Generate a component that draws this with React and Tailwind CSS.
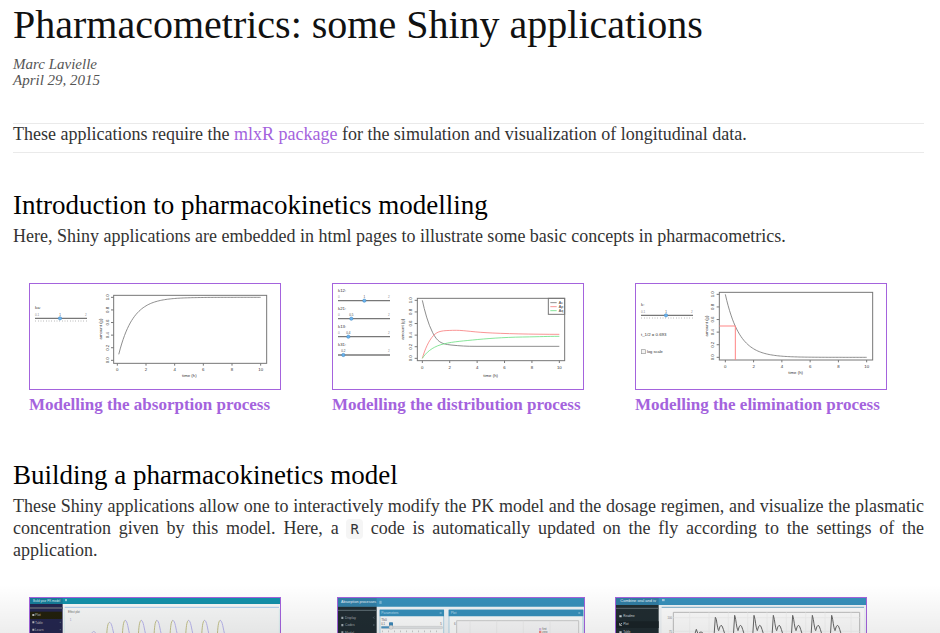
const GREY = "#777";

function Axis({ box, xTicks, yTicks, xTitle, yTitle }) {
  const [left, top, right, bottom] = box;
  return (
    <g fontSize="13" fill="#333" stroke="none" textAnchor="middle">
      <rect x={left} y={top} width={right - left} height={bottom - top} fill="none" stroke={GREY} strokeWidth="3" />
      {xTicks.map(([x, label]) => (
        <g key={label}>
          <path d={`M${x} ${bottom}v7`} stroke={GREY} strokeWidth="3" />
          <text x={x} y={bottom + 24}>{label}</text>
        </g>
      ))}
      {yTicks.map(([y, label]) => (
        <g key={label}>
          <path d={`M${left} ${y}h-8`} stroke={GREY} strokeWidth="3" />
          <text transform={`translate(${left - 15} ${y}) rotate(-90)`}>{label}</text>
        </g>
      ))}
      <text x={xTitle[0]} y={xTitle[1]}>time (h)</text>
      <text transform={`translate(${yTitle[0]} ${yTitle[1]}) rotate(-90)`}>amount (g)</text>
    </g>
  );
}

function ticks(start, end, labels) {
  return labels.map((label, i) => [start + ((end - start) * i) / (labels.length - 1), label]);
}

const HOURS = ["0", "2", "4", "6", "8", "10"];
const AMOUNTS = ["0.0", "0.2", "0.4", "0.6", "0.8", "1.0"];

function curve(fn, from, x0, x10, y0, y1) {
  const points = [];
  for (let t = from; t <= 10.001; t += 0.1) {
    points.push(`${(x0 + ((x10 - x0) * t) / 10).toFixed(1)},${(y0 + (y1 - y0) * fn(t)).toFixed(1)}`);
  }
  return points.join(" ");
}

function SliderDrawing({ x, y, knob, name, value, min = "0", nameGap = 27, dots = false }) {
  return (
    <g>
      <text x={x} y={y - nameGap} fontSize="13" fill="#333">{name}</text>
      <g fontSize="9" fill="#888">
        {knob - x > 25 && <text x={x} y={y - 8}>{min}</text>}
        <text x={knob} y={y - 8} textAnchor="middle" fill="#444">{value}</text>
        <text x={x + 155} y={y - 8} textAnchor="end">2</text>
      </g>
      <path d={`M${x} ${y}h156`} stroke="#777" strokeWidth="4" />
      {dots && <path d={`M${x + 1} ${y + 8}h160`} stroke="#bbb" strokeWidth="4" strokeDasharray="2 6" />}
      <circle cx={knob} cy={y} r="5" fill="#69b3ee" stroke="#3c83bd" strokeWidth="1.5" />
    </g>
  );
}

function AbsorptionPlot() {
  return (
    <svg viewBox="30 27 750 315" className="block w-full font-['Liberation_Sans',sans-serif]" aria-hidden="true">
      <SliderDrawing x={45} y={130} knob={120} name="ka:" value="1" min="0.1" dots />
      <Axis box={[281, 61, 740, 265]} xTicks={ticks(292, 722, HOURS)} yTicks={ticks(256, 67, AMOUNTS)} xTitle={[508, 305]} yTitle={[246, 162]} />
      <polyline points={curve((t) => 1 - Math.exp(-t), 0.1, 292, 722, 256, 67)} fill="none" stroke="#777" strokeWidth="2.5" />
    </svg>
  );
}

function DistributionPlot() {
  return (
    <svg viewBox="21 27 750 315" className="block w-full font-['Liberation_Sans',sans-serif]" aria-hidden="true">
      <SliderDrawing x={36} y={77} knob={115} name="k12:" value="1" />
      <SliderDrawing x={36} y={131} knob={76} name="k21:" value="0.5" />
      <SliderDrawing x={36} y={185} knob={67} name="k13:" value="0.4" />
      <SliderDrawing x={36} y={240} knob={52} name="k31:" value="0.2" />
      <Axis box={[274, 70, 716, 257]} xTicks={ticks(289, 700, HOURS)} yTicks={ticks(250, 76, AMOUNTS)} xTitle={[494, 306]} yTitle={[234, 163]} />
      <g fill="none" strokeWidth="2.5">
        <path d="M289 76C296 108 306 146 320 173S345 207 375 210S420 214 450 214H700" stroke="#777" />
        <path d="M289 250C296 225 308 197 322 182S350 167 380 166S430 170 480 173S620 178 700 178" stroke="#f88080" />
        <path d="M289 250C300 233 318 217 345 209S400 199 440 195S530 187 590 186S660 184 700 184" stroke="#70e085" />
        <rect x="667" y="70" width="49" height="48" stroke={GREY} strokeWidth="3" />
        <path d="M673 83h19" stroke="#777" />
        <path d="M673 95h19" stroke="#f88080" />
        <path d="M673 107h19" stroke="#70e085" />
      </g>
      <g fontSize="11" fill="#333" textAnchor="middle">
        <text x="705" y="87">Ac</text>
        <text x="705" y="99">Ap</text>
        <text x="705" y="111">Aq</text>
      </g>
    </svg>
  );
}

function EliminationPlot() {
  return (
    <svg viewBox="21 27 750 315" className="block w-full font-['Liberation_Sans',sans-serif]" aria-hidden="true">
      <SliderDrawing x={36} y={121} knob={111} name="k:" value="1" min="0.1" dots />
      <text x="36" y="182" fontSize="13" fill="#333">t_1/2 = 0.693</text>
      <rect x="37" y="224" width="12" height="12" fill="#f4f4f4" stroke="#999" strokeWidth="2" />
      <text x="54" y="234" fontSize="12" fill="#333">log scale</text>
      <Axis box={[271, 52, 731, 255]} xTicks={ticks(289, 713, HOURS)} yTicks={ticks(247, 58, AMOUNTS)} xTitle={[500, 296]} yTitle={[238, 153]} />
      <polyline points={curve((t) => Math.exp(-t), 0, 289, 713, 247, 58)} fill="none" stroke="#777" strokeWidth="2.5" />
      <path d="M271 153H319V255" fill="none" stroke="#ff8585" strokeWidth="3" />
    </svg>
  );
}

function BuildModelShot() {
  const peaks = [268, 315, 363, 410, 458, 505, 553, 600];
  return (
    <svg viewBox="30 24 750 315" className="block w-full font-['Liberation_Sans',sans-serif]" aria-hidden="true">
      <path d="M30 24h750v315H30z" fill="#f6f7f7" />
      <path d="M30 24h750v18H30z" fill="#1290aa" />
      <path d="M30 24h98v18H30z" fill="#157c98" />
      <path d="M30 42h98v297H30z" fill="#24264f" />
      <path d="M30 51h98v6H30z" fill="#54576b" />
      <path d="M30 65h96v22H30z" fill="#22200d" />
      <text x="39" y="35" fontSize="9" fill="#d9edf3">Build your PK model</text>
      <path d="M135 29h6M135 32h6" stroke="#e4f5f8" strokeWidth="2" />
      <path d="M134 52h643" stroke="#a9cbec" strokeWidth="3" />
      <path d="M133 56v283M778 56v283" stroke="#cdeeee" strokeWidth="2" />
      <g fill="#bbb" fontSize="10">
        <path d="M37 72h6v6h-6zM37 94h6v6h-6zM37 116h6v6h-6z" />
        <text x="45" y="79">Plot</text>
        <text x="45" y="101">Table</text>
        <text x="45" y="123">Learn</text>
        <path d="M119 97h4M119 119h4" stroke="#688" strokeWidth="2" />
      </g>
      <text x="144" y="69" fontSize="8" fill="#666">Effect plot</text>
      <text x="149" y="94" fontSize="9" fill="#99c">1</text>
      <g fill="none" strokeWidth="3">
        <path d="M214 132C219 122 223 122 229 132" stroke="#bcb8e6" />
        {peaks.map((x, i) => {
          const top = i ? 91 : 97;
          return (
            <g key={x}>
              <path d={`M${x - 8} 139C${x - 7} 115 ${x - 5} ${top} ${x + 1} ${top}`} stroke="#c4c18a" />
              <path d={`M${x} ${top}C${x + 8} ${top} ${x + 9} 118 ${x + 15} 136`} stroke="#b9b5ee" />
            </g>
          );
        })}
      </g>
    </svg>
  );
}

function AbsorptionProcessesShot() {
  return (
    <svg viewBox="39 25 738 315" className="block w-full font-['Liberation_Sans',sans-serif]" aria-hidden="true">
      <path d="M39 25h738v315H39z" fill="#eef3f6" />
      <path d="M39 25h738v26H39z" fill="#368fba" />
      <path d="M39 25h116v26H39z" fill="#317fa6" />
      <path d="M39 51h116v289H39z" fill="#202c32" />
      <path d="M39 62h116" stroke="#617078" strokeWidth="3" />
      <text x="48" y="41" fontSize="11" fill="#e5f2f8">Absorption processes</text>
      <path d="M163 35h7M163 38h7M163 41h7" stroke="#c9e4f0" strokeWidth="1.5" />
      <g fill="#a0abb1" fontSize="10">
        <path d="M49 81h6v7h-6zM49 103h6v7h-6zM49 125h6v7h-6z" />
        <text x="60" y="88">Display</text>
        <text x="60" y="110">Codes</text>
        <text x="60" y="132">Model</text>
        <path d="M148 81l-3 3l3 3M148 103l-3 3l3 3" fill="none" stroke="#789" strokeWidth="1.5" />
      </g>
      <path d="M165 60h191v280H165zM372 60h402v280H372z" fill="#fafbfb" stroke="#91c3dc" strokeWidth="2" />
      <path d="M164 60h193v20H164zM371 60h404v20H371z" fill="#368fba" />
      <g fontSize="10" fill="#b8dded">
        <text x="169" y="74">Parameters</text>
        <text x="377" y="74">Plot</text>
        <path d="M344 70h6M760 70h6" stroke="#d8edf7" strokeWidth="2" />
      </g>
      <g fontSize="10" fill="#555">
        <text x="169" y="94">Tk0</text>
        <text x="169" y="106" fontSize="8">0.1</text>
        <text x="346" y="106" fontSize="8">5</text>
      </g>
      <rect x="192" y="98" width="12" height="11" rx="2" fill="#3d88b8" />
      <rect x="169" y="110" width="184" height="7" rx="3" fill="#e1e4e6" stroke="#bbb" />
      <path d="M169 113h25" stroke="#4b96c5" strokeWidth="6" />
      <circle cx="198" cy="113" r="6" fill="#e4e4e4" stroke="#aaa" />
      <path d="M171 125h180" stroke="#ccc" strokeWidth="5" strokeDasharray="3 15" />
      <path d="M395 340V93h366v247" fill="#f6f6f7" stroke="#ccc" strokeWidth="3" />
      <path d="M435 93v50M515 93v50M595 93v50M675 93v50" stroke="#e8e8ea" strokeWidth="2" />
      <text x="387" y="106" fontSize="9" fill="#777">6</text>
      <path d="M642 119h7" stroke="#d5bce5" strokeWidth="8" />
      <path d="M642 127h7" stroke="#f28a83" strokeWidth="6" />
      <text x="652" y="121" fontSize="8" fill="#666">first</text>
      <text x="652" y="130" fontSize="8" fill="#666">zero</text>
    </svg>
  );
}

function CombineShot() {
  const peaks = [332, 390, 448, 506, 564, 623, 681];
  return (
    <svg viewBox="33 24 750 315" className="block w-full font-['Liberation_Sans',sans-serif]" aria-hidden="true">
      <path d="M33 24h750v315H33z" fill="#eef2f5" />
      <path d="M33 24h750v21H33z" fill="#368fba" />
      <path d="M33 24h128v21H33z" fill="#307ca2" />
      <path d="M33 45h128v294H33z" fill="#202c31" />
      <path d="M33 55h128" stroke="#5e6a70" strokeWidth="3" />
      <path d="M33 94h128v20H33z" fill="#192327" />
      <text x="46" y="35" fontSize="12" fill="#e5f2f8">Combine oral and iv</text>
      <path d="M171 29h8M171 32h8" stroke="#e5f2f8" strokeWidth="2" />
      <g fill="#cbd4d8" fontSize="9">
        <path d="M43 76h7v6h-7zM43 124h7v6h-7z" />
        <path d="M44 99v7h7M46 104l5-5" fill="none" stroke="#eee" strokeWidth="2" />
        <text x="55" y="82">Readme</text>
        <text x="55" y="106">Plot</text>
        <text x="55" y="130">Table</text>
      </g>
      <path d="M170 54h607v285H170z" fill="#fbfbfb" />
      <path d="M170 52h607" stroke="#7faec8" strokeWidth="3" />
      <path d="M205 339V67h559v272" fill="none" stroke="#bbb" strokeWidth="3" />
      <path d="M254 67v70M312 67v70M370 67v70M428 67v70M486 67v70M544 67v70M602 67v70M660 67v70M738 67v70M205 83h559M205 124h559" stroke="#eee" strokeWidth="2" />
      <text x="201" y="86" fontSize="8" fill="#777" textAnchor="end">100</text>
      <text x="201" y="128" fontSize="8" fill="#777" textAnchor="end">75</text>
      <g fill="none" stroke="#666" strokeWidth="3">
        <path d="M269 134L274 118L279 132Q288 119 298 134" />
        {peaks.map((x, i) => (
          <path key={x} d={`M${x - 5} 139L${x - 1} ${i ? 76 : 82}L${x + 2} 88Q${x + 6} 118 ${x + 9} 122Q${x + 16} 92 ${x + 23} 118L${x + 28} 134`} />
        ))}
      </g>
    </svg>
  );
}

const CONCEPTS = [
  { title: "Modelling the absorption process", Drawing: AbsorptionPlot },
  { title: "Modelling the distribution process", Drawing: DistributionPlot },
  { title: "Modelling the elimination process", Drawing: EliminationPlot },
];

export default function App() {
  return (
    <div className="relative h-screen overflow-hidden bg-white font-['Liberation_Serif',serif] text-[18px] leading-[22px] text-[#333]">
      <main className="px-[13px] pr-4 pt-[3px]">
        <header>
          <h1 className="text-[40px] leading-[44px] text-[#111]">Pharmacometrics: some Shiny applications</h1>
          <address className="mt-[9px] text-[15px] leading-4 text-[#555]">
            Marc Lavielle
            <br />
            <time dateTime="2015-04-29">April 29, 2015</time>
          </address>
        </header>

        <p className="mt-[35px] border-y border-[#eaeaea] pb-2 leading-5">
          These applications require the{" "}
          <a href="#mlxr" className="text-[#a463dd]">mlxR package</a> for the simulation and visualization of longitudinal data.
        </p>

        <section className="mt-9">
          <h2 className="text-[27px] leading-8 text-black">Introduction to pharmacokinetics modelling</h2>
          <p className="mt-1">Here, Shiny applications are embedded in html pages to illustrate some basic concepts in pharmacometrics.</p>
          <ul className="mt-9 flex gap-[51px] pl-4">
            {CONCEPTS.map(({ title, Drawing }) => (
              <li key={title} className="w-[252px] shrink-0">
                <a href="#app" className="block whitespace-nowrap text-[#a463dd]">
                  <span className="block border border-[#a463dd]">
                    <Drawing />
                  </span>
                  <span className="mt-1 block text-[17px] font-bold">{title}</span>
                </a>
              </li>
            ))}
          </ul>
        </section>

        <section className="mt-[43px]">
          <h2 className="text-[27px] leading-8 text-black">Building a pharmacokinetics model</h2>
          <p className="mt-1 text-justify">
            These Shiny applications allow one to interactively modify the PK model and the dosage regimen, and visualize the plasmatic
            concentration given by this model. Here, a{" "}
            <code className="rounded bg-[#f5f5f5] px-1 py-0.5 font-['DejaVu_Sans_Mono',monospace] text-[14px] leading-none">R</code> code is
            automatically updated on the fly according to the settings of the application.
          </p>
          <div className="mt-9 flex items-start pl-4">
            <a href="#build" aria-label="Build your PK model" className="mr-14 block w-[252px] shrink-0 border border-[#a463dd]">
              <BuildModelShot />
            </a>
            <a href="#absorption" aria-label="Absorption processes" className="mr-[30px] block w-[248px] shrink-0 border border-[#a463dd]">
              <AbsorptionProcessesShot />
            </a>
            <a href="#combine" aria-label="Combine oral and iv" className="block w-[252px] shrink-0 border border-[#a463dd]">
              <CombineShot />
            </a>
          </div>
        </section>
      </main>
      <div className="pointer-events-none absolute inset-x-0 bottom-0 h-12 bg-linear-to-b from-transparent to-black/7" />
    </div>
  );
}
